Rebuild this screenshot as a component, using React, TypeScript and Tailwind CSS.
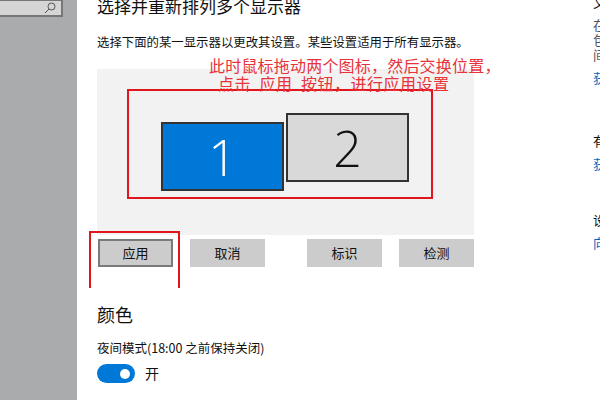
import React from 'react';

const ui = { fontFamily: '"Noto Sans CJK SC", "Noto Sans", sans-serif' };

const Btn: React.FC<{ label: string; active?: boolean; className?: string }> = ({ label, active, className }) => (
    <div
        className={`w-[75px] h-[28px] flex items-center justify-center bg-[#cccccc] text-[13px] text-[#111] ${active ? 'border-2 border-[#7a7a7a]' : ''} ${className ?? ''}`}
    >
        {label}
    </div>
);

const App: React.FC = () => {
    return (
        <div className="w-[600px] h-[400px] flex bg-white overflow-hidden" style={ui}>
            {/* left nav, mostly greyed out */}
            <div className="w-[77px] h-full bg-[#aaabad] shrink-0">
                <div className="w-[63px] h-[18px] -mt-[1px] bg-[#d5d5d5] border-2 border-[#777] border-l-0 flex items-center justify-end pr-[5px]">
                    <svg width="12" height="12" viewBox="0 0 12 12" fill="none" stroke="#555" strokeWidth="1">
                        <circle cx="7.5" cy="4.5" r="3.5" />
                        <path d="M5 7 L1 11" />
                    </svg>
                </div>
            </div>

            {/* main settings column */}
            <div className="relative w-[516px] pl-[20px] shrink-0 text-[#111]">
                <div className="text-[17px] leading-[22px] -mt-[5px]">选择并重新排列多个显示器</div>
                <div className="text-[12.4px] leading-[18px] mt-[16px]">选择下面的某一显示器以更改其设置。某些设置适用于所有显示器。</div>

                <div className="relative w-[377px] h-[166px] mt-[18px] bg-[#f2f2f2]">
                    <div className="absolute left-[64px] top-[53px] w-[123px] h-[69px] bg-[#0078d7] border-2 border-[#333] flex items-center justify-center text-white text-[50px] font-extralight leading-none" style={{ fontFamily: '"Open Sans", "Noto Sans", sans-serif' }}>
                        1
                    </div>
                    <div className="absolute left-[189px] top-[44px] w-[123px] h-[69px] bg-[#d9d9d9] border-2 border-[#333] flex items-center justify-center text-[#111] text-[50px] font-extralight leading-none" style={{ fontFamily: '"Open Sans", "Noto Sans", sans-serif' }}>
                        2
                    </div>
                    {/* annotation frame */}
                    <div className="absolute left-[30px] top-[20px] w-[306px] h-[110px] border-2 border-[#e0161c]" />
                </div>

                <div className="flex mt-[4px] ml-[1px] gap-[17px]">
                    <Btn label="应用" active />
                    <Btn label="取消" />
                    <Btn label="标识" className="ml-[25px]" />
                    <Btn label="检测" />
                </div>

                <div className="text-[18px] leading-[26px] mt-[34px]">颜色</div>
                <div className="text-[12.5px] leading-[18px] mt-[12px]">夜间模式(18:00 之前保持关闭)</div>
                <div className="flex items-center mt-[6px] gap-[10px]">
                    <div className="w-[38px] h-[19px] rounded-full bg-[#0078d7] flex items-center justify-end pr-[5px]">
                        <div className="w-[10px] h-[10px] rounded-full bg-white" />
                    </div>
                    <span className="text-[14px]">开</span>
                </div>

                {/* red annotations */}
                <div className="absolute left-[132px] top-[56px] text-[16px] leading-[18px] tracking-[0.2px] text-[#e8333a] whitespace-nowrap">
                    此时鼠标拖动两个图标，然后交换位置，
                </div>
                <div className="absolute left-[141px] top-[74px] text-[16px] leading-[18px] tracking-[0.5px] text-[#e8333a] whitespace-nowrap">
                    点击{'\u2002'}应用{'\u2002'}按钮，进行应用设置
                </div>
                <div className="absolute left-[12px] top-[231px] w-[91px] h-[57px] border-2 border-[#e0161c] border-b-0" />
            </div>

            {/* right related-settings column, cut off */}
            <div className="flex-1 text-[13px] leading-[15px] overflow-hidden whitespace-nowrap">
                <div className="-mt-[6px] text-[#111]">文</div>
                <div className="mt-[8px] text-[#555]">在</div>
                <div className="text-[#555]">包</div>
                <div className="text-[#555]">间</div>
                <div className="mt-[8px] text-[#0067c0]">获</div>
                <div className="mt-[48px] text-[#111]">有</div>
                <div className="mt-[8px] text-[#0067c0]">获</div>
                <div className="mt-[41px] text-[#111]">设</div>
                <div className="mt-[8px] text-[#0067c0]">向</div>
            </div>
        </div>
    );
};

export default App;
